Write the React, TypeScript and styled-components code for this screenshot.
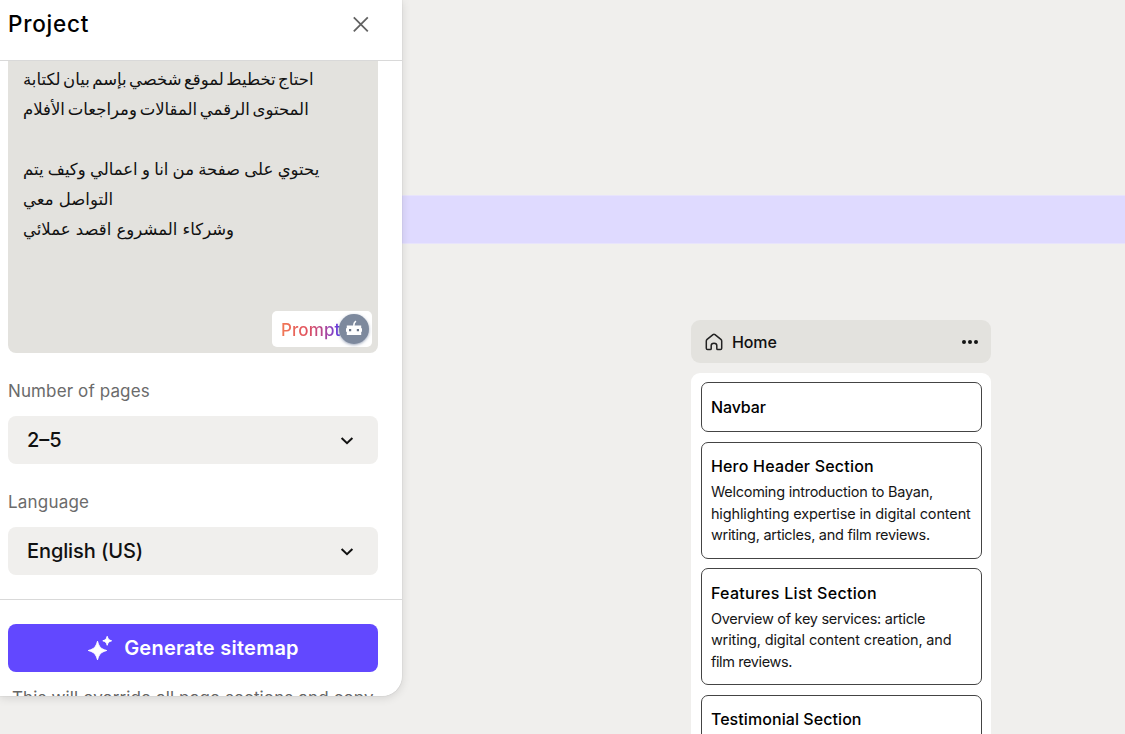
import React from "react";
import styled, { createGlobalStyle } from "styled-components";

const Global = createGlobalStyle`
  * { box-sizing: border-box; }
  body { margin: 0; background: #f0efed; overflow: hidden; }
  button { font: inherit; border: 0; background: none; padding: 0; }
`;

const Page = styled.div`
  display: flex;
  width: 1125px;
  height: 734px;
  overflow: hidden;
  background: #f0efed;
  color: #111;
  font-family: Inter, "DejaVu Sans", sans-serif;
`;

const Text = styled.span<{ $size: number; $line: number; $weight?: number; $track?: number }>`
  display: block;
  font-size: ${(p) => p.$size}px;
  line-height: ${(p) => p.$line}px;
  font-weight: ${(p) => p.$weight ?? 400};
  letter-spacing: ${(p) => p.$track ?? 0}px;
  white-space: nowrap;
`;

const Panel = styled.aside`
  display: flex;
  flex-direction: column;
  width: 402px;
  height: 696px;
  overflow: hidden;
  background: #fff;
  border-radius: 0 0 20px 0;
`;

const PanelShadow = styled.div`
  position: relative;
  z-index: 1;
  width: 402px;
  height: 696px;
  flex: none;
  border-radius: 0 0 20px 0;
  box-shadow: 0 0 1px rgba(0, 0, 0, 0.3), 0 2px 10px rgba(0, 0, 0, 0.12);
`;

const PanelHeader = styled.header`
  display: flex;
  align-items: center;
  justify-content: space-between;
  height: 61px;
  flex: none;
  padding: 0 33px 12px 8px;
  border-bottom: 1px solid #d9d9d9;
  color: #000;
`;

const CloseButton = styled.button`
  display: flex;
  color: #626262;
`;

const PanelBody = styled.div`
  height: 539px;
  flex: none;
  padding: 0 24px 0 8px;
  border-bottom: 1px solid #d9d9d9;
`;

const PromptBox = styled.div`
  display: flex;
  flex-direction: column;
  justify-content: space-between;
  height: 292px;
  padding: 4px 6px 6px 15px;
  background: #e3e2de;
  border-radius: 0 0 8px 8px;
`;

const ArabicLine = styled.p<{ $gap: number }>`
  margin: 0;
  height: 30px;
  font: 16.5px/30px "DejaVu Sans", sans-serif;
  word-spacing: ${(p) => p.$gap}px;
  white-space: pre;
`;

const PromptBadge = styled.div`
  display: flex;
  align-items: center;
  align-self: flex-end;
  width: 100px;
  height: 36px;
  padding-left: 9px;
  background: #fff;
  border-radius: 5px;
`;

const PromptLabel = styled(Text)`
  width: 60px;
  padding-top: 2px;
  color: transparent;
  background: linear-gradient(90deg, #f27a55 0%, #e0505f 45%, #b04596 72%, #5a3df0 100%);
  background-clip: text;
`;

const Bot = styled.div`
  display: flex;
  flex: none;
  align-items: center;
  justify-content: center;
  width: 30px;
  height: 30px;
  margin-left: -2px;
  border-radius: 50%;
  background: #7d899d;
  box-shadow: 0 1px 3px rgba(60, 80, 120, 0.5);
`;

const Field = styled.div`
  display: flex;
  flex-direction: column;
  gap: 13px;
  padding-top: 27px;
  color: #6b6b6b;
`;

const Select = styled.div`
  display: flex;
  align-items: center;
  justify-content: space-between;
  height: 48px;
  padding: 0 24px 0 19px;
  border-radius: 8px;
  background: #f0efed;
  color: #111;
`;

const PanelFooter = styled.footer`
  display: flex;
  flex-direction: column;
  gap: 14px;
  padding: 24px 24px 0 8px;
`;

const GenerateButton = styled.button`
  display: flex;
  align-items: center;
  justify-content: center;
  gap: 11px;
  height: 48px;
  flex: none;
  border-radius: 8px;
  background: #6248ff;
  color: #fff;
`;

const Note = styled(Text)`
  padding-left: 4px;
  color: #666;
`;

const Canvas = styled.main`
  flex: 1;
  min-width: 0;
  padding-top: 195px;
`;

const Band = styled.div`
  height: 49px;
  background: #dfdaff;
  border-top: 1px solid #e8e4fb;
  border-bottom: 1px solid #e8e4fb;
`;

const PageColumn = styled.section`
  display: flex;
  flex-direction: column;
  gap: 10px;
  width: 300px;
  margin: 76px 0 0 289.4px;
`;

const PageHeader = styled.div`
  display: flex;
  align-items: center;
  gap: 8.5px;
  height: 43px;
  padding: 0 13.5px 0 14px;
  border-radius: 9px;
  background: #e3e2de;
  svg:last-child { margin-left: auto; }
`;

const Sections = styled.div`
  display: flex;
  flex-direction: column;
  gap: 9.6px;
  height: 420px;
  padding: 9.1px 9.5px;
  border-radius: 9px;
  background: #fff;
`;

const Card = styled.article<{ $height: number }>`
  height: ${(p) => p.$height}px;
  flex: none;
  padding: 11.6px 9px;
  border: 1px solid #444;
  border-radius: 7px;
  color: #000;
`;

const Copy = styled.div`
  padding-top: 3px;
  color: #161616;
`;

const Chevron = () => (
  <svg width="14" height="14" viewBox="0 0 14 14" fill="none" stroke="#111" strokeWidth="2">
    <path d="M1.600 5 7 10.200l5.400-5.200" />
  </svg>
);

const Close = () => (
  <svg width="16" height="16" viewBox="0 0 16 16" fill="none" stroke="currentColor" strokeWidth="1.800">
    <path d="m.8 1.300 14 14M14.800 1.300l-14 14" />
  </svg>
);

const Sparkles = () => (
  <svg width="26" height="26" viewBox="0 0 26 26" fill="currentColor" stroke="currentColor" strokeWidth="1" strokeLinejoin="round">
    <path d="M10.500 6.200c1.600 5.800 3.300 7.700 9.200 9.300-5.900 1.700-7.600 3.600-9.200 9.300-1.600-5.700-3.300-7.600-9.200-9.300 5.900-1.600 7.600-3.500 9.200-9.300Z" />
    <path d="M20.200 1.300c.8 2.900 1.600 3.700 4.400 4.500-2.800.8-3.600 1.700-4.400 4.500-.8-2.800-1.600-3.700-4.400-4.500 2.800-.8 3.600-1.600 4.400-4.500Z" />
  </svg>
);

const Robot = () => (
  <svg width="18" height="18" viewBox="0 0 18 18">
    <path d="M8.800 6c0-2.600.3-3.700 2.200-4.800" fill="none" stroke="#fff" strokeWidth="1.500" />
    <path d="M1.800 5.500h14.400v2.700h.8v3.600h-.8v3.100H1.800v-3.100H1V8.200h.8Z" fill="#fff" />
    <path d="M4 9h2.200v2.200H4zM11.800 9H14v2.200h-2.200z" fill="#687386" />
  </svg>
);

const House = () => (
  <svg width="18" height="18" viewBox="0 0 18 18" fill="none" stroke="#222" strokeWidth="1.500" strokeLinejoin="round">
    <path d="M1.300 8c0-.7.300-1.200.8-1.600L8 1.600c.6-.5 1.400-.5 2 0l5.900 4.800c.5.4.8.9.8 1.600v7.300c0 .8-.5 1.300-1.300 1.300h-2.700c-.6 0-.9-.3-.9-.9v-3.100c0-1.500-1.100-2.400-2.800-2.400s-2.800.9-2.800 2.400v3.100c0 .6-.3.900-.9.900H2.600c-.8 0-1.300-.5-1.300-1.300Z" />
  </svg>
);

const Dots = () => (
  <svg width="16" height="6" viewBox="0 0 16 6" fill="#151515">
    <circle cx="2" cy="3" r="2" />
    <circle cx="8" cy="3" r="2" />
    <circle cx="14" cy="3" r="2" />
  </svg>
);

const prompt = [
  { text: "احتاج تخطيط لموقع شخصي بإسم بيان لكتابة", gap: -2.8 },
  { text: "المحتوى الرقمي المقالات ومراجعات الأفلام", gap: -2.5 },
  { text: "", gap: 0 },
  { text: "يحتوي على صفحة من انا و اعمالي وكيف يتم", gap: -1 },
  { text: "التواصل معي", gap: 0 },
  { text: "وشركاء المشروع اقصد عملائي", gap: 0 },
];

const cards = [
  { title: "Navbar", track: -0.1, height: 50, copy: [] },
  {
    title: "Hero Header Section", track: 0.2, height: 117,
    copy: [
      { text: "Welcoming introduction to Bayan,", track: -0.25 },
      { text: "highlighting expertise in digital content", track: -0.12 },
      { text: "writing, articles, and film reviews.", track: -0.28 },
    ],
  },
  {
    title: "Features List Section", track: 0.29, height: 117,
    copy: [
      { text: "Overview of key services: article", track: -0.28 },
      { text: "writing, digital content creation, and", track: -0.14 },
      { text: "film reviews.", track: -0.38 },
    ],
  },
  { title: "Testimonial Section", track: 0.07, height: 117, copy: [] },
];

export default function App() {
  return (
    <Page>
      <Global />
      <PanelShadow>
        <Panel>
          <PanelHeader>
            <Text $size={22.5} $line={30} $weight={500} $track={0.75}>Project</Text>
            <CloseButton aria-label="Close"><Close /></CloseButton>
          </PanelHeader>
          <PanelBody>
            <PromptBox>
              <div>
                {prompt.map((line, i) => <ArabicLine key={i} $gap={line.gap}>{line.text}</ArabicLine>)}
              </div>
              <PromptBadge>
                <PromptLabel $size={17} $line={24} $weight={500} $track={0.1}>Prompt</PromptLabel>
                <Bot><Robot /></Bot>
              </PromptBadge>
            </PromptBox>
            <Field>
              <Text $size={17} $line={23} $track={0.12}>Number of pages</Text>
              <Select><Text $size={20} $line={28} $weight={500}>2–5</Text><Chevron /></Select>
            </Field>
            <Field>
              <Text $size={17} $line={23} $track={0.2}>Language</Text>
              <Select><Text $size={20} $line={28} $weight={500} $track={-0.1}>English (US)</Text><Chevron /></Select>
            </Field>
          </PanelBody>
          <PanelFooter>
            <GenerateButton>
              <Sparkles />
              <Text $size={20} $line={28} $weight={600} $track={0.25}>Generate sitemap</Text>
            </GenerateButton>
            <Note $size={17} $line={24} $track={0.13}>This will override all page sections and copy</Note>
          </PanelFooter>
        </Panel>
      </PanelShadow>
      <Canvas>
        <Band />
        <PageColumn>
          <PageHeader>
            <House />
            <Text $size={16} $line={24} $weight={500} $track={-0.1}>Home</Text>
            <Dots />
          </PageHeader>
          <Sections>
            {cards.map((card) => (
              <Card key={card.title} $height={card.height}>
                <Text $size={16} $line={24} $weight={500} $track={card.track}>{card.title}</Text>
                <Copy>
                  {card.copy.map((line) => (
                    <Text key={line.text} $size={14.5} $line={21.5} $track={line.track}>{line.text}</Text>
                  ))}
                </Copy>
              </Card>
            ))}
          </Sections>
        </PageColumn>
      </Canvas>
    </Page>
  );
}
